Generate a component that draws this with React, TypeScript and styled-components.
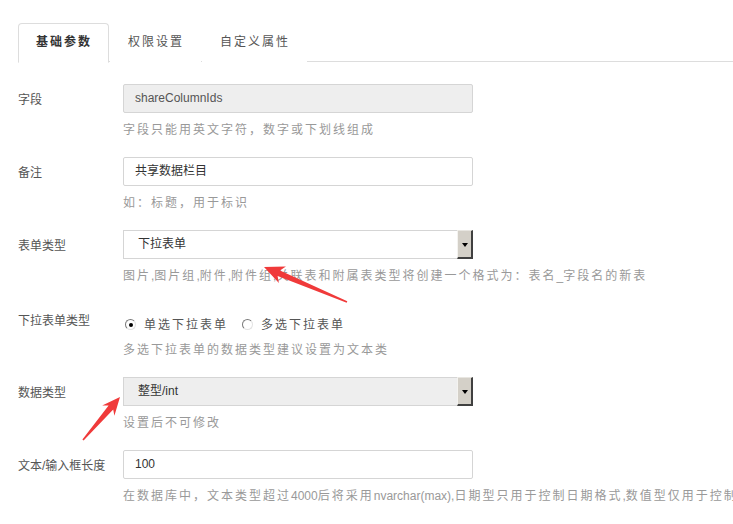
import React from "react";
import styled, { createGlobalStyle } from "styled-components";

const Global = createGlobalStyle`
  html, body { margin: 0; padding: 0; background: #fff; overflow: hidden; }
  body {
    font-family: "Liberation Sans", "Noto Sans CJK SC", sans-serif;
    font-size: 12px;
    color: #555;
  }
`;

const Page = styled.div`
  position: relative;
  width: 733px;
  height: 524px;
  padding: 23px 0 0 18px;
  box-sizing: border-box;
  overflow: hidden;
`;

const TabList = styled.ul`
  list-style: none;
  margin: 0;
  padding: 0;
  display: flex;
  gap: 1px;
  border-bottom: 1px solid #ddd;
  height: 39px;
  box-sizing: border-box;
`;

const Tab = styled.li<{ $active?: boolean }>`
  height: 40px;
  box-sizing: border-box;
  padding: 0 16px 0 17px;
  line-height: 37px;
  font-size: 12px;
  letter-spacing: 2px;
  color: ${(p) => (p.$active ? "#333" : "#555")};
  font-weight: ${(p) => (p.$active ? 700 : 400)};
  border: 1px solid ${(p) => (p.$active ? "#ddd" : "transparent")};
  border-bottom-color: ${(p) => (p.$active ? "#fff" : "transparent")};
  border-radius: 4px 4px 0 0;
  background: #fff;
  margin-bottom: -1px;
`;

const Form = styled.div`
  margin-top: 22px;
  display: flex;
  flex-direction: column;
  gap: 18px;
`;

const Row = styled.div`
  display: grid;
  grid-template-columns: 105px 350px;
  align-items: start;
`;

const Label = styled.div<{ $offset?: number }>`
  padding-top: ${(p) => 2 + (p.$offset ?? 0)}px;
  line-height: 29px;
  font-size: 12px;
  color: #555;
  white-space: nowrap;
`;

const Control = styled.div`
  display: flex;
  flex-direction: column;
`;

const TextInput = styled.div<{ $disabled?: boolean; $dark?: boolean }>`
  height: 29px;
  box-sizing: border-box;
  border: 1px solid #d5d5d5;
  border-radius: 2px;
  background: ${(p) => (p.$disabled ? "#eee" : "#fff")};
  padding-left: 11px;
  line-height: 27px;
  font-size: 12px;
  color: ${(p) => (p.$dark ? "#333" : "#555")};
`;

const SelectBox = styled.div<{ $disabled?: boolean }>`
  height: 29px;
  box-sizing: border-box;
  border: 1px solid #d5d5d5;
  border-right: none;
  background: ${(p) => (p.$disabled ? "#eee" : "#fff")};
  display: flex;
  align-items: stretch;
`;

const SelectText = styled.div`
  flex: 1;
  padding-left: 14px;
  line-height: 27px;
  font-size: 12px;
  color: #333;
`;

const SelectButton = styled.div`
  width: 16px;
  margin-top: -1px;
  margin-bottom: -1px;
  box-sizing: border-box;
  background: #d4d0c8;
  border-top: 1px solid #e8e6e1;
  border-left: 1px solid #f4f3f0;
  border-right: 2px solid #404040;
  border-bottom: 2px solid #404040;
  display: flex;
  align-items: center;
  justify-content: center;
  padding-top: 1px;
`;

const Caret = styled.span`
  width: 0;
  height: 0;
  border-left: 3.5px solid transparent;
  border-right: 3.5px solid transparent;
  border-top: 4px solid #000;
`;

const Help = styled.div`
  margin-top: 8px;
  line-height: 18px;
  font-size: 12px;
  letter-spacing: 2px;
  color: #999;
  white-space: nowrap;
`;

const Latin = styled.span`
  letter-spacing: 0;
`;

const RadioGroup = styled.div`
  height: 30px;
  box-sizing: border-box;
  padding-top: 13px;
  display: flex;
  align-items: center;
  line-height: 16px;
`;

const RadioItem = styled.label`
  display: flex;
  align-items: center;
  gap: 8px;
  margin-left: 2px;
  margin-right: 12px;
  font-size: 12px;
  letter-spacing: 2px;
  color: #555;
`;

const RadioCircle = styled.span<{ $checked?: boolean }>`
  width: 11px;
  height: 11px;
  box-sizing: border-box;
  border-radius: 50%;
  border: 1px solid;
  border-color: #7a7a7a #e2e2e2 #e2e2e2 #7a7a7a;
  background: #fff;
  display: flex;
  align-items: center;
  justify-content: center;
  &::after {
    content: "";
    width: 4px;
    height: 4px;
    border-radius: 50%;
    background: ${(p) => (p.$checked ? "#000" : "transparent")};
  }
`;

const Overlay = styled.svg`
  position: absolute;
  left: 0;
  top: 0;
  pointer-events: none;
`;

export default function App() {
  return (
    <Page>
      <Global />
      <TabList>
        <Tab $active>基础参数</Tab>
        <Tab>权限设置</Tab>
        <Tab>自定义属性</Tab>
      </TabList>
      <Form>
        <Row>
          <Label>字段</Label>
          <Control>
            <TextInput $disabled>shareColumnIds</TextInput>
            <Help>字段只能用英文字符，数字或下划线组成</Help>
          </Control>
        </Row>
        <Row>
          <Label>备注</Label>
          <Control>
            <TextInput $dark>共享数据栏目</TextInput>
            <Help>如：标题，用于标识</Help>
          </Control>
        </Row>
        <Row>
          <Label>表单类型</Label>
          <Control>
            <SelectBox>
              <SelectText>下拉表单</SelectText>
              <SelectButton>
                <Caret />
              </SelectButton>
            </SelectBox>
            <Help>
              图片<Latin>,</Latin>图片组<Latin>,</Latin>附件<Latin>,</Latin>附件组
              <Latin>,</Latin>关联表和附属表类型将创建一个格式为：表名<Latin>_</Latin>字段名的新表
            </Help>
          </Control>
        </Row>
        <Row>
          <Label $offset={2}>下拉表单类型</Label>
          <Control>
            <RadioGroup>
              <RadioItem>
                <RadioCircle $checked />
                单选下拉表单
              </RadioItem>
              <RadioItem>
                <RadioCircle />
                多选下拉表单
              </RadioItem>
            </RadioGroup>
            <Help>多选下拉表单的数据类型建议设置为文本类</Help>
          </Control>
        </Row>
        <Row>
          <Label>数据类型</Label>
          <Control>
            <SelectBox $disabled>
              <SelectText>
                整型<Latin>/int</Latin>
              </SelectText>
              <SelectButton>
                <Caret />
              </SelectButton>
            </SelectBox>
            <Help>设置后不可修改</Help>
          </Control>
        </Row>
        <Row>
          <Label>文本/输入框长度</Label>
          <Control>
            <TextInput $dark>100</TextInput>
            <Help>
              在数据库中，文本类型超过<Latin>4000</Latin>后将采用
              <Latin>nvarchar(max),</Latin>日期型只用于控制日期格式<Latin>,</Latin>
              数值型仅用于控制小数位数
            </Help>
          </Control>
        </Row>
      </Form>
      <Overlay width="733" height="524" viewBox="0 0 733 524">
        <polygon
          fill="#f03a3a"
          points="264,267 285.9,266.5 280,270.4 347.3,301.3 346.7,302.7 277.6,276 278.9,283.1"
        />
        <polygon
          fill="#f03a3a"
          points="120,397 114.4,415.8 113.2,409.6 83.6,440.5 82.4,439.5 108.6,405.6 102.2,405.4"
        />
      </Overlay>
    </Page>
  );
}
